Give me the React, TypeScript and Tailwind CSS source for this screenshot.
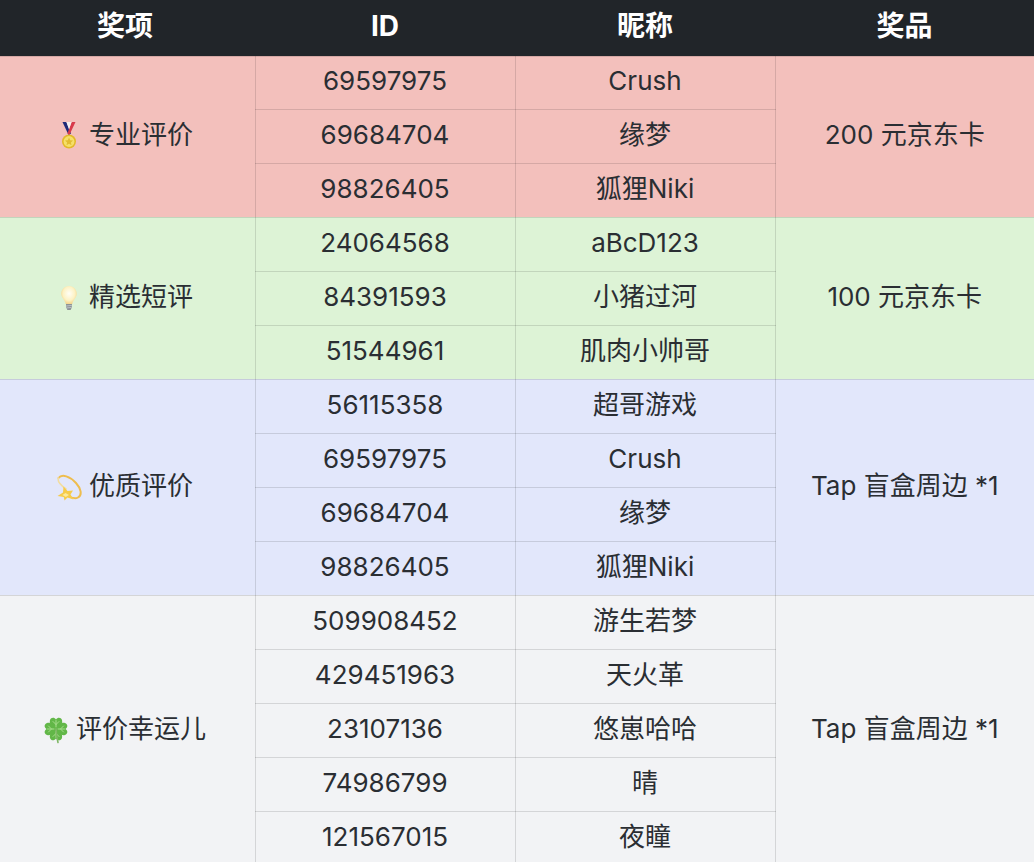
import React from 'react';

function Medal() {
    return (
        <svg viewBox="0 0 26 30" className="w-[26px] h-[30px] inline-block align-middle">
            <path d="M6.5 0 L12.6 13 L15 11.5 L10.4 0 Z" fill="#1f2a78" />
            <path d="M19.5 0 L13.4 13 L11.4 11.5 L15.6 0 Z" fill="#d8394a" />
            <path d="M10.4 0 L13 7.5 L15.6 0 Z" fill="#f3eeee" />
            <circle cx="13" cy="19.5" r="7" fill="#e3b92a" />
            <circle cx="13" cy="19.5" r="5.4" fill="#f5e06a" />
            <path d="M13 15.5 L14.2 18.2 L17 18.5 L14.9 20.4 L15.5 23.2 L13 21.8 L10.5 23.2 L11.1 20.4 L9 18.5 L11.8 18.2 Z" fill="#e2bd34" />
        </svg>
    );
}

function Bulb() {
    return (
        <svg viewBox="0 0 26 30" className="w-[26px] h-[30px] inline-block align-middle">
            <defs>
                <radialGradient id="bulbGlow" cx="50%" cy="42%" r="58%">
                    <stop offset="0%" stopColor="#fffef6" />
                    <stop offset="65%" stopColor="#fdf2c4" />
                    <stop offset="100%" stopColor="#f3d48c" />
                </radialGradient>
            </defs>
            <path d="M13 3 C8 3 5.2 7 5.2 10.8 C5.2 14.6 8.6 16.4 9.8 21 L16.2 21 C17.4 16.4 20.8 14.6 20.8 10.8 C20.8 7 18 3 13 3 Z" fill="url(#bulbGlow)" />
            <path d="M10 21 L16 21 L15.8 24.6 L14.6 27 L11.4 27 L10.2 24.6 Z" fill="#8c9296" />
            <path d="M10.2 23 L15.8 22.4 M10.4 25 L15.6 24.4" stroke="#c8cdd0" strokeWidth="0.8" />
        </svg>
    );
}

function Dizzy() {
    return (
        <svg viewBox="0 0 26 30" className="w-[26px] h-[30px] inline-block align-middle">
            <path d="M2.5 6 C6 1.5 14 4.5 20 11 C25 16.5 26.5 23 22 25.5 C19 27.2 14.5 25.5 11 23.5" fill="none" stroke="#eebd4e" strokeWidth="2" strokeLinecap="round" />
            <path d="M2.5 6 C1 9.5 5 13.5 10 17" fill="none" stroke="#f2dda0" strokeWidth="1.6" strokeLinecap="round" />
            <path d="M1.5 24 L7 20.5 L7.5 14.5 L11.5 19 L17 18.5 L14.5 22.5 L17.5 27.5 L11.5 25.5 L8.5 28.5 L7.8 25 Z" fill="#f6cb4a" />
            <path d="M6.5 23 L9.5 21 L13 23 L9.8 25 Z" fill="#fcea9c" />
        </svg>
    );
}

function Clover() {
    const leaf = 'M13 14 C9 12 6 9 7 5 C8 2 11.5 2 13 4.5 C14.5 2 18 2 19 5 C20 9 17 12 13 14 Z';
    return (
        <svg viewBox="0 0 26 30" className="w-[26px] h-[30px] inline-block align-middle">
            {[0, 90, 180, 270].map(deg => (
                <g key={deg} transform={`rotate(${deg} 13 14)`}>
                    <path d={leaf} fill="#62b748" />
                    <path d="M13 12 L13 5.5 M13 9.5 L10 6.5 M13 9.5 L16 6.5" stroke="#a6dd8c" strokeWidth="1" strokeLinecap="round" />
                </g>
            ))}
            <path d="M13 14 C13.2 18 13.8 23 15 27.5" fill="none" stroke="#7fb765" strokeWidth="1.6" strokeLinecap="round" />
        </svg>
    );
}

const groups = [
    {
        icon: <Medal />,
        name: '专业评价',
        prize: '200 元京东卡',
        bg: 'bg-[#f3c0bc]',
        rows: [['69597975', 'Crush'], ['69684704', '缘梦'], ['98826405', '狐狸Niki']],
    },
    {
        icon: <Bulb />,
        name: '精选短评',
        prize: '100 元京东卡',
        bg: 'bg-[#ddf3d6]',
        rows: [['24064568', 'aBcD123'], ['84391593', '小猪过河'], ['51544961', '肌肉小帅哥']],
    },
    {
        icon: <Dizzy />,
        name: '优质评价',
        prize: 'Tap 盲盒周边 *1',
        bg: 'bg-[#e2e7fb]',
        rows: [['56115358', '超哥游戏'], ['69597975', 'Crush'], ['69684704', '缘梦'], ['98826405', '狐狸Niki']],
    },
    {
        icon: <Clover />,
        name: '评价幸运儿',
        prize: 'Tap 盲盒周边 *1',
        bg: 'bg-[#f2f3f5]',
        rows: [['509908452', '游生若梦'], ['429451963', '天火革'], ['23107136', '悠崽哈哈'], ['74986799', '晴'], ['121567015', '夜瞳']],
    },
];

export default function App() {
    return (
        <div className="h-screen overflow-hidden bg-white font-['Inter','Noto_Sans_CJK_SC',sans-serif] text-[26px] text-[#2a2e33]">
            <table className="w-[1034px] table-fixed border-collapse">
                <colgroup>
                    <col className="w-[255px]" />
                    <col className="w-[260px]" />
                    <col className="w-[260px]" />
                    <col className="w-[259px]" />
                </colgroup>
                <thead>
                    <tr className="h-14 bg-[#212529] text-[28px] text-white">
                        <th className="pb-1 pr-[5px] font-bold">奖项</th>
                        <th className="pb-1 font-bold">ID</th>
                        <th className="pb-1 font-bold">昵称</th>
                        <th className="pb-1 font-bold">奖品</th>
                    </tr>
                </thead>
                <tbody>
                    {groups.map((group, g) =>
                        group.rows.map((row, i) => (
                            <tr key={group.name + i} className={`${g === 0 && i === 0 ? 'h-[53px]' : 'h-[54px]'} ${group.bg}`}>
                                {i === 0 && (
                                    <td rowSpan={group.rows.length} className="border border-l-0 border-black/[.12] pb-1 pr-[6px] text-center">
                                        {group.icon} {group.name}
                                    </td>
                                )}
                                <td className="border border-black/[.12] pb-1 text-center">{row[0]}</td>
                                <td className="border border-black/[.12] pb-1 text-center">{row[1]}</td>
                                {i === 0 && (
                                    <td rowSpan={group.rows.length} className="border border-r-0 border-black/[.12] pb-1 text-center">
                                        {group.prize}
                                    </td>
                                )}
                            </tr>
                        )),
                    )}
                </tbody>
            </table>
        </div>
    );
}
